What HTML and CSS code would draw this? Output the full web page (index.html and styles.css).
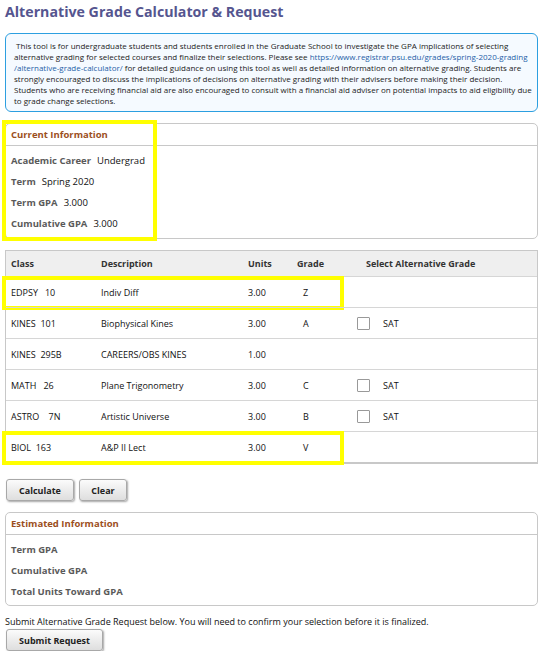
FILE: index.html
```html
<!DOCTYPE html>
<html>
<head>
<meta charset="utf-8">
<link rel="stylesheet" href="styles.css">
</head>
<body>
<div class="page">
  <h1 class="title">Alternative Grade Calculator &amp; Request</h1>

  <div class="notice">
    &nbsp;This tool is for undergraduate students and students enrolled in the Graduate School to investigate the GPA implications of selecting<br>alternative grading for selected courses and finalize their selections. Please see <span class="link">https://www.registrar.psu.edu/grades/spring-2020-grading</span><br><span class="link">/alternative-grade-calculator/</span> for detailed guidance on using this tool as well as detailed information on alternative grading. Students are<br>strongly encouraged to discuss the implications of decisions on alternative grading with their advisers before making their decision.<br>Students who are receiving financial aid are also encouraged to consult with a financial aid adviser on potential impacts to aid eligibility due<br>to grade change selections.
  </div>

  <section class="panel panel-current">
    <div class="panel-head">Current Information</div>
    <div class="panel-body">
      <div class="info-row"><span class="lbl">Academic Career</span><span class="val">Undergrad</span></div>
      <div class="info-row"><span class="lbl">Term</span><span class="val">Spring 2020</span></div>
      <div class="info-row"><span class="lbl">Term GPA</span><span class="val">3.000</span></div>
      <div class="info-row"><span class="lbl">Cumulative GPA</span><span class="val">3.000</span></div>
    </div>
    <div class="hl hl-current"></div>
  </section>

  <div class="grid">
    <div class="g-row g-head">
      <div class="c-class">Class</div>
      <div class="c-desc">Description</div>
      <div class="c-units">Units</div>
      <div class="c-grade">Grade</div>
      <div class="c-sel">Select Alternative Grade</div>
    </div>
    <div class="g-row">
      <div class="c-class">EDPSY&nbsp;&nbsp; 10</div>
      <div class="c-desc">Indiv Diff</div>
      <div class="c-units">3.00</div>
      <div class="c-grade">Z</div>
      <div class="c-sel"></div>
      <div class="hl hl-row"></div>
    </div>
    <div class="g-row">
      <div class="c-class">KINES&nbsp; 101</div>
      <div class="c-desc">Biophysical Kines</div>
      <div class="c-units">3.00</div>
      <div class="c-grade">A</div>
      <div class="c-sel"><span class="box"></span><span class="sat">SAT</span></div>
    </div>
    <div class="g-row">
      <div class="c-class">KINES&nbsp; 295B</div>
      <div class="c-desc">CAREERS/OBS KINES</div>
      <div class="c-units">1.00</div>
      <div class="c-grade"></div>
      <div class="c-sel"></div>
    </div>
    <div class="g-row">
      <div class="c-class">MATH&nbsp;&nbsp; 26</div>
      <div class="c-desc">Plane Trigonometry</div>
      <div class="c-units">3.00</div>
      <div class="c-grade">C</div>
      <div class="c-sel"><span class="box"></span><span class="sat">SAT</span></div>
    </div>
    <div class="g-row">
      <div class="c-class">ASTRO&nbsp;&nbsp;&nbsp; 7N</div>
      <div class="c-desc">Artistic Universe</div>
      <div class="c-units">3.00</div>
      <div class="c-grade">B</div>
      <div class="c-sel"><span class="box"></span><span class="sat">SAT</span></div>
    </div>
    <div class="g-row">
      <div class="c-class">BIOL&nbsp; 163</div>
      <div class="c-desc">A&amp;P II Lect</div>
      <div class="c-units">3.00</div>
      <div class="c-grade">V</div>
      <div class="c-sel"></div>
      <div class="hl hl-row"></div>
    </div>
  </div>

  <div class="buttons">
    <button class="btn btn-calc">Calculate</button>
    <button class="btn btn-clear">Clear</button>
  </div>

  <section class="panel panel-est">
    <div class="panel-head">Estimated Information</div>
    <div class="panel-body">
      <div class="info-row"><span class="lbl">Term GPA</span></div>
      <div class="info-row"><span class="lbl">Cumulative GPA</span></div>
      <div class="info-row"><span class="lbl">Total Units Toward GPA</span></div>
    </div>
  </section>

  <p class="submit-note">Submit Alternative Grade Request below. You will need to confirm your selection before it is finalized.</p>
  <button class="btn btn-submit">Submit Request</button>
</div>
</body>
</html>
```

FILE: styles.css
```css
* { box-sizing: border-box; }
body {
  margin: 0;
  font-family: "Open Sans", "DejaVu Sans", sans-serif;
  font-size: 9px;
  color: #111;
  background: #fff;
}
.page {
  width: 533px;
  margin-left: 5px;
  padding-top: 2px;
  display: flex;
  flex-direction: column;
}
.title {
  margin: 0;
  font-size: 14.2px;
  font-weight: bold;
  color: #55558f;
  line-height: 20px;
  height: 31px;
}
.notice {
  border: 1px solid #2c9fe0;
  border-radius: 6px;
  background: #f5faff;
  padding: 6px 4px 6px 8px;
  font-size: 8px;
  line-height: 11px;
  color: #222;
  height: 79px;
  white-space: nowrap;
  overflow: hidden;
}
.link { color: #1f5fa8; }

.panel {
  position: relative;
  border: 1px solid #c8c8c8;
  border-radius: 5px;
  margin-top: 11px;
}
.panel-head {
  height: 22px;
  line-height: 21px;
  padding-left: 5px;
  font-weight: bold;
  font-size: 9.5px;
  color: #9c4f1d;
  border-bottom: 1px solid #c8c8c8;
}
.panel-current .panel-body { padding: 4px 5px 4px 5px; }
.panel-est .panel-body { padding: 4px 5px 3px 5px; }
.info-row {
  height: 21px;
  line-height: 21px;
  display: flex;
  gap: 6px;
  font-size: 9.5px;
}
.lbl { font-weight: bold; color: #5a5a5a; }
.val { color: #111; }

.hl {
  position: absolute;
  border: 4px solid #ffff00;
  pointer-events: none;
}
.hl-current { left: -4px; top: -4px; width: 155px; height: 121px; }

.grid {
  margin-top: 11px;
  border: 1px solid #c8c8c8;
  border-bottom-width: 2px;
}
.g-row {
  position: relative;
  display: grid;
  grid-template-columns: 90px 147px 49px 65px 1fr;
  height: 31px;
  align-items: center;
  border-top: 1px solid #d6d6d6;
}
.g-row > div { padding-left: 5px; }
.g-head {
  height: 25px;
  border-top: none;
  background: #efefef;
  font-weight: bold;
  color: #333;
}
.g-row .c-grade { padding-left: 11px; }
.g-head .c-grade { padding-left: 5px; }
.g-row .c-sel { padding-left: 0; }
.g-head .c-sel { padding-left: 9px; }
.c-sel { display: flex; align-items: center; }
.box {
  width: 13px;
  height: 13px;
  border: 1px solid #999;
  border-radius: 1px;
  background: #fff;
}
.sat { margin-left: 13px; }
.hl-row { left: -4px; top: -1px; width: 342px; height: 34px; padding: 0; }

.buttons {
  display: flex;
  gap: 5px;
  margin-top: 15px;
  padding-left: 1px;
}
.btn {
  font-family: "Open Sans", "DejaVu Sans", sans-serif;
  font-size: 9px;
  font-weight: bold;
  color: #222;
  height: 22px;
  padding: 0;
  white-space: nowrap;
  border: 1px solid #a8a8a8;
  border-radius: 3px;
  background: linear-gradient(#fbfbfb, #dedede);
  box-shadow: 1px 1px 2px rgba(0,0,0,0.35);
}
.btn-calc { width: 68px; }
.btn-clear { width: 48px; }
.panel-est { margin-top: 11px; }

.submit-note {
  margin: 10px 0 0 0;
  line-height: 12px;
  color: #111;
}
.btn-submit {
  align-self: flex-start;
  margin-top: 1px;
  margin-left: 1px;
  width: 97px;
}
```
